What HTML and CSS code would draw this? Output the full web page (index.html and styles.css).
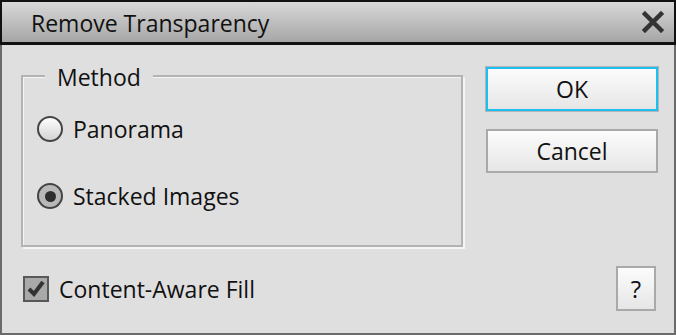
FILE: index.html
```html
<!DOCTYPE html>
<html>
<head>
<meta charset="utf-8">
<link rel="stylesheet" href="styles.css">
</head>
<body>
<div class="window">
  <div class="titlebar">
    <span class="title">Remove Transparency</span>
    <svg class="close" width="22" height="22" viewBox="0 0 22 22"><path d="M3 3 L19 19 M19 3 L3 19" stroke="#333" stroke-width="4.5" stroke-linecap="square"/></svg>
  </div>
  <div class="body">
    <div class="left">
      <div class="group">
        <span class="legend">Method</span>
        <div class="radio-row"><span class="radio"></span><span class="label">Panorama</span></div>
        <div class="radio-row"><span class="radio checked"></span><span class="label">Stacked Images</span></div>
      </div>
      <div class="check-row">
        <span class="checkbox"><svg width="22" height="22" viewBox="0 0 22 22"><path d="M4 11 L9 16 L18 4" stroke="#333" stroke-width="4" fill="none"/></svg></span>
        <span class="label">Content-Aware Fill</span>
      </div>
    </div>
    <div class="right">
      <button class="btn ok">OK</button>
      <button class="btn">Cancel</button>
      <div class="spacer"></div>
      <button class="btn help">?</button>
    </div>
  </div>
</div>
</body>
</html>
```
FILE: styles.css
```css
* { box-sizing: border-box; }
html, body { margin: 0; padding: 0; }
body { width: 676px; height: 335px; overflow: hidden; font-family: "Open Sans", "Noto Sans", sans-serif; color: #111; }
.window { width: 676px; height: 335px; display: flex; flex-direction: column; }
.titlebar {
  height: 45px;
  border: 2px solid #111;
  border-bottom-width: 3px;
  background: linear-gradient(#d8d8d8, #a6a6a6);
  display: flex; align-items: center; justify-content: space-between;
  padding: 0 10px 0 29px;
}
.title { font-size: 23px; margin-top: 1px; }
.body {
  flex: 1;
  background: #dfdfdf;
  border: 2px solid #6b6b6b; border-top: none;
  display: flex;
  padding: 21px 16px 0 19px;
}
.left { display: flex; flex-direction: column; padding-top: 9px; }
.group {
  position: relative;
  width: 442px; height: 172px;
  border: 2px solid #b3b3b3;
  box-shadow: inset 1px 1px 0 #f4f4f4, 2px 2px 0 #f4f4f4;
  padding: 32px 0 0 14px;
}
.legend {
  position: absolute; left: 22px; top: -14px;
  background: #dfdfdf; padding: 0 12px;
  font-size: 23px; line-height: 28px;
}
.radio-row { display: flex; align-items: center; height: 40px; margin-bottom: 27px; }
.radio {
  width: 26px; height: 26px; border-radius: 50%;
  border: 2px solid #444;
  background: linear-gradient(#fdfdfd, #d4d4d4);
  margin-right: 10px; flex: none;
  display: flex; align-items: center; justify-content: center;
}
.radio.checked { background: #b8b8b8; }
.radio.checked::after { content: ""; width: 11px; height: 11px; border-radius: 50%; background: #2e2e2e; }
.label { font-size: 23px; }
.check-row { display: flex; align-items: center; margin-top: 27px; margin-left: 2px; height: 30px; }
.checkbox {
  width: 26px; height: 26px; border: 2px solid #585858; background: #a9a9a9;
  margin-right: 10px; display: flex; align-items: center; justify-content: center;
}
.right { display: flex; flex-direction: column; align-items: flex-end; margin-left: 21px; flex: 1; }
.btn {
  font-family: inherit; font-size: 23px; color: #111;
  width: 172px; height: 44px;
  border: 2px solid #a9a9a9;
  background: linear-gradient(#fcfcfc, #e6e6e6);
  padding: 0; margin: 0 0 18px 0;
}
.btn.ok { border-color: #1cbff0; box-shadow: 0 0 0 1px #b5b5b5; margin-top: 1px; }
.spacer { flex: 1; }
.help { width: 40px; height: 45px; margin: 0 2px 22px 0; font-size: 24px; }
```
